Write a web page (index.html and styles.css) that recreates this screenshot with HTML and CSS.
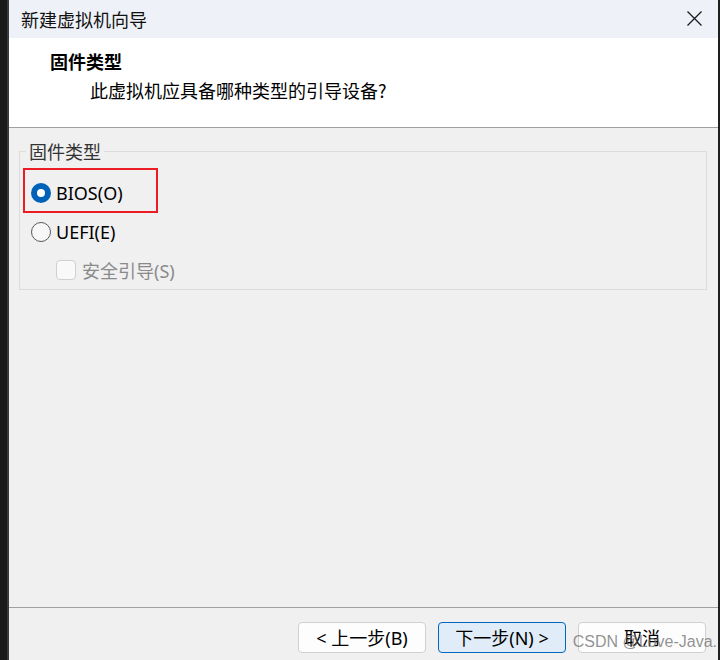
FILE: index.html
```html
<!DOCTYPE html>
<html lang="zh-CN">
<head>
<meta charset="utf-8">
<title>新建虚拟机向导</title>
<link rel="stylesheet" href="styles.css">
</head>
<body>
<div class="edge-left"></div>
<div class="window">
  <div class="titlebar">
    <span class="title">新建虚拟机向导</span>
    <svg class="close" width="15" height="15" viewBox="0 0 15 15"><path d="M0.5 0.5 L14.5 14.5 M14.5 0.5 L0.5 14.5" stroke="#1a1a1a" stroke-width="1.3" fill="none"/></svg>
  </div>
  <div class="header">
    <div class="heading">固件类型</div>
    <div class="subtitle">此虚拟机应具备哪种类型的引导设备?</div>
  </div>
  <div class="content">
    <fieldset class="group">
      <legend class="legend">固件类型</legend>
      <div class="option option-marked">
        <span class="radio radio-on"></span>
        <span class="label">BIOS(O)</span>
      </div>
      <div class="option option-second">
        <span class="radio"></span>
        <span class="label">UEFI(E)</span>
      </div>
      <div class="option option-check">
        <span class="checkbox"></span>
        <span class="label label-disabled">安全引导(S)</span>
      </div>
    </fieldset>
  </div>
  <div class="footer">
    <button class="btn">&lt; 上一步(B)</button>
    <button class="btn btn-primary">下一步(N) &gt;</button>
    <button class="btn">取消</button>
    <span class="watermark">CSDN @Love-Java.</span>
  </div>
</div>
<div class="edge-right"></div>
</body>
</html>
```

FILE: styles.css
```css
html, body {
  margin: 0;
  padding: 0;
}
body {
  width: 720px;
  height: 660px;
  overflow: hidden;
  display: flex;
  background: #1a1a1a;
  font-family: "Noto Sans", "Noto Sans CJK SC", sans-serif;
  color: #000;
}
.edge-left {
  width: 7px;
  background: #1a1a1a;
  border-right: 2px solid #3a3a3a;
}
.edge-right {
  width: 2px;
  background: #1f1f1f;
}
.window {
  flex: 1;
  display: flex;
  flex-direction: column;
  background: #f0f0f0;
  min-width: 0;
}
.titlebar {
  height: 38px;
  background: #eff1f8;
  display: flex;
  align-items: center;
  justify-content: space-between;
  padding: 0 16px 0 12px;
  flex-shrink: 0;
}
.title {
  font-family: "Noto Sans CJK SC", sans-serif;
  font-size: 18px;
  color: #111;
}
.close {
  display: block;
  margin-top: -2px;
}
.header {
  height: 90px;
  background: #fff;
  border-bottom: 1px solid #a0a0a0;
  padding: 11px 0 0 41px;
  box-sizing: border-box;
  flex-shrink: 0;
}
.heading {
  font-family: "Noto Sans CJK SC", sans-serif;
  font-weight: 700;
  font-size: 18px;
  line-height: 24px;
}
.subtitle {
  font-family: "Noto Sans CJK SC", sans-serif;
  font-size: 18px;
  line-height: 24px;
  margin-top: 5px;
  padding-left: 40px;
}
.content {
  flex: 1;
  padding: 12px 11px 0 10px;
}
.group {
  margin: 0;
  border: 1px solid #dcdcdc;
  padding: 0 0 0 4px;
}
.legend {
  margin-left: 2px;
  padding: 0 3px;
  font-family: "Noto Sans CJK SC", sans-serif;
  font-size: 18px;
  line-height: 22px;
  color: #333;
}
.option {
  display: flex;
  align-items: center;
  height: 38px;
  box-sizing: border-box;
}
.option-marked {
  width: 135px;
  height: 45px;
  border: 2px solid #ec1c24;
  margin-top: 6px;
  margin-left: -1px;
  padding: 4px 0 0 6px;
}
.option-second {
  padding-left: 7px;
}
.option-check {
  padding-left: 32px;
}
.radio {
  width: 20px;
  height: 20px;
  border-radius: 50%;
  box-sizing: border-box;
  border: 1px solid #5a5a5a;
  background: #f7f7f7;
  flex-shrink: 0;
  display: flex;
  align-items: center;
  justify-content: center;
}
.radio-on {
  border: none;
  background: #0061b8;
}
.radio-on::after {
  content: "";
  width: 8px;
  height: 8px;
  border-radius: 50%;
  background: #fff;
}
.label {
  margin-left: 5px;
  font-size: 18px;
  color: #000;
}
.checkbox {
  width: 20px;
  height: 20px;
  box-sizing: border-box;
  border: 1px solid #d0d0d0;
  border-radius: 4px;
  background: #f9f9f9;
  flex-shrink: 0;
}
.label-disabled {
  margin-left: 6px;
  color: #8a8a8a;
}
.footer {
  position: relative;
  height: 53px;
  box-sizing: border-box;
  border-top: 1px solid #a0a0a0;
  display: flex;
  justify-content: flex-end;
  gap: 12px;
  padding: 14px 12px 0 0;
  flex-shrink: 0;
}
.btn {
  width: 128px;
  height: 31px;
  box-sizing: border-box;
  background: #fdfdfd;
  border: 1px solid #d0d0d0;
  border-radius: 4px;
  font-family: "Noto Sans", "Noto Sans CJK SC", sans-serif;
  font-size: 18px;
  color: #000;
  padding: 0;
  line-height: 1;
}
.btn-primary {
  background: #e0ecf8;
  border-color: #0067c0;
}
.watermark {
  position: absolute;
  right: 1px;
  top: 25px;
  font-family: "Liberation Sans", Arial, sans-serif;
  font-size: 16px;
  color: rgba(110, 110, 110, 0.75);
  pointer-events: none;
}
```
